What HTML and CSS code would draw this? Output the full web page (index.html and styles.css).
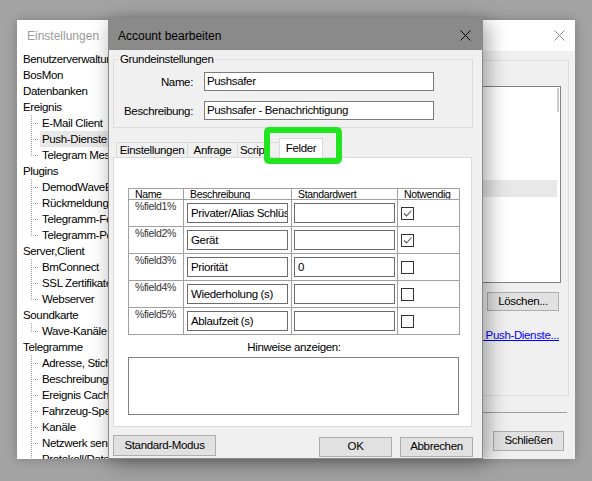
FILE: index.html
```html
<!DOCTYPE html>
<html lang="de">
<head>
<meta charset="utf-8">
<title>Account bearbeiten</title>
<link rel="stylesheet" href="styles.css">
</head>
<body>
<div class="desktop">
  <section class="win bgwin">
    <header class="titlebar bg-title">
      <span>Einstellungen</span>
      <svg class="xicon" width="11" height="11" viewBox="0 0 11 11"><path d="M0.5 0.5L10.5 10.5M10.5 0.5L0.5 10.5" stroke="#8a8a8a" stroke-width="1" fill="none"/></svg>
    </header>
    <div class="bgbody">
      <ul class="tree">
        <li>Benutzerverwaltung</li>
        <li>BosMon</li>
        <li>Datenbanken</li>
        <li>Ereignis</li>
        <li class="kid">E-Mail Client</li>
        <li class="kid"><span class="hl">Push-Dienste</span></li>
        <li class="kid last">Telegram Messenger</li>
        <li>Plugins</li>
        <li class="kid">DemodWaveExport</li>
        <li class="kid">Rückmeldung</li>
        <li class="kid">Telegramm-Felder</li>
        <li class="kid last">Telegramm-Post</li>
        <li>Server,Client</li>
        <li class="kid">BmConnect</li>
        <li class="kid">SSL Zertifikate</li>
        <li class="kid last">Webserver</li>
        <li>Soundkarte</li>
        <li class="kid last">Wave-Kanäle</li>
        <li>Telegramme</li>
        <li class="kid">Adresse, Stichwort</li>
        <li class="kid">Beschreibungen</li>
        <li class="kid">Ereignis Cache</li>
        <li class="kid">Fahrzeug-Speicher</li>
        <li class="kid">Kanäle</li>
        <li class="kid">Netzwerk senden</li>
        <li class="kid">Protokoll/Datei</li>
      </ul>
      <div class="rpane">
        <div class="rgroup">
          <div class="listbox">
            <div class="lb-main"><div class="sel"></div></div>
            <div class="lb-sb"><div class="thumb"></div></div>
          </div>
          <button class="btn btn-del">Löschen...</button>
          <a class="link" href="#">Weitere Push-Dienste...</a>
        </div>
        <div class="sep"></div>
        <button class="btn btn-close">Schließen</button>
      </div>
    </div>
  </section>

  <section class="win dlg">
    <header class="titlebar dlg-title">
      <span>Account bearbeiten</span>
      <svg class="xicon" width="11" height="11" viewBox="0 0 11 11"><path d="M0.5 0.5L10.5 10.5M10.5 0.5L0.5 10.5" stroke="#000" stroke-width="1" fill="none"/></svg>
    </header>
    <div class="dlg-body">
      <fieldset class="grp">
        <legend>Grundeinstellungen</legend>
        <div class="form">
          <label>Name:</label><div class="input">Pushsafer</div>
          <label>Beschreibung:</label><div class="input">Pushsafer - Benachrichtigung</div>
        </div>
      </fieldset>

      <div class="tabs">
        <div class="tabstrip">
          <div class="tab t-einst">Einstellungen</div>
          <div class="tab t-anf">Anfrage</div>
          <div class="tab t-script">Script</div>
          <div class="tab t-felder active">Felder</div>
        </div>
        <div class="panel">
          <div class="grid">
            <div class="hcell">Name</div>
            <div class="hcell">Beschreibung</div>
            <div class="hcell">Standardwert</div>
            <div class="hcell">Notwendig</div>

            <div class="cell name">%field1%</div>
            <div class="cell"><div class="tinput desc">Privater/Alias Schlüssel</div></div>
            <div class="cell"><div class="tinput std"></div></div>
            <div class="cell"><span class="cb"><svg width="11" height="11" viewBox="0 0 11 11"><path d="M2 5.5L4.5 8L9.5 2.5" stroke="#555" stroke-width="1.1" fill="none"/></svg></span></div>

            <div class="cell name">%field2%</div>
            <div class="cell"><div class="tinput desc">Gerät</div></div>
            <div class="cell"><div class="tinput std"></div></div>
            <div class="cell"><span class="cb"><svg width="11" height="11" viewBox="0 0 11 11"><path d="M2 5.5L4.5 8L9.5 2.5" stroke="#555" stroke-width="1.1" fill="none"/></svg></span></div>

            <div class="cell name">%field3%</div>
            <div class="cell"><div class="tinput desc">Priorität</div></div>
            <div class="cell"><div class="tinput std">0</div></div>
            <div class="cell"><span class="cb"></span></div>

            <div class="cell name">%field4%</div>
            <div class="cell"><div class="tinput desc">Wiederholung (s)</div></div>
            <div class="cell"><div class="tinput std"></div></div>
            <div class="cell"><span class="cb"></span></div>

            <div class="cell name">%field5%</div>
            <div class="cell"><div class="tinput desc">Ablaufzeit (s)</div></div>
            <div class="cell"><div class="tinput std"></div></div>
            <div class="cell"><span class="cb"></span></div>
          </div>
          <div class="hint">Hinweise anzeigen:</div>
          <div class="textarea"></div>
        </div>
      </div>

      <div class="footer">
        <button class="btn btn-std">Standard-Modus</button>
        <span class="spacer"></span>
        <button class="btn btn-ok">OK</button>
        <button class="btn btn-cancel">Abbrechen</button>
      </div>
    </div>
  </section>

  <div class="highlight"></div>
</div>
</body>
</html>
```

FILE: styles.css
```css
* { box-sizing: border-box; }

body {
  margin: 0;
  width: 592px;
  height: 481px;
  overflow: hidden;
  background: #a3a3a3;
  font-family: "Liberation Sans", Arial, sans-serif;
  font-size: 11.5px;
  letter-spacing: -0.35px;
  color: #000;
}

.desktop {
  position: relative;
  width: 592px;
  height: 481px;
}

.win {
  position: absolute;
  display: flex;
  flex-direction: column;
  background: #f0f0f0;
}

/* ---------- background window ---------- */
.bgwin {
  left: 17px;
  top: 20px;
  width: 558px;
  height: 439px;
  box-shadow: 0 0 10px rgba(0, 0, 0, 0.25);
}

.titlebar {
  flex: none;
  display: flex;
  align-items: center;
  justify-content: space-between;
  font-size: 12px;
  letter-spacing: 0;
}

.xicon { display: block; }

.bg-title {
  height: 31px;
  background: #fff;
  color: #9a9a9a;
  padding: 0 10px 0 10px;
}

.bgbody {
  flex: 1;
  display: flex;
  min-height: 0;
}

.tree {
  width: 100px;
  flex: none;
  margin: 0;
  padding: 0;
  list-style: none;
  background: #fff;
  overflow: hidden;
  white-space: nowrap;
}

.tree li {
  height: 16px;
  line-height: 16px;
  padding-left: 6px;
}

.tree li.kid {
  padding-left: 25px;
  background-image:
    repeating-linear-gradient(to bottom, #a0a0a0 0 1px, transparent 1px 2px),
    repeating-linear-gradient(to right, #a0a0a0 0 1px, transparent 1px 2px);
  background-size: 1px 16px, 8px 1px;
  background-position: 14px 0, 14px 8px;
  background-repeat: no-repeat;
}

.tree li.kid.last {
  background-size: 1px 9px, 8px 1px;
}

.tree .hl {
  display: block;
  margin-left: -2px;
  padding-left: 2px;
  background: #e8e8e8;
}

.rpane {
  flex: 1;
  display: flex;
  flex-direction: column;
  align-items: flex-end;
  padding: 9px 6px 0 6px;
}

.rgroup {
  align-self: stretch;
  height: 336px;
  border: 1px solid #dcdcdc;
  display: flex;
  flex-direction: column;
  align-items: flex-end;
  padding: 25px 7px 0 0;
}

.listbox {
  align-self: stretch;
  margin-left: 8px;
  height: 197px;
  border: 1px solid #828282;
  background: #fff;
  display: flex;
}

.lb-main {
  flex: 1;
  padding-top: 93px;
}

.sel {
  height: 17px;
  background: #e8e8e8;
}

.lb-sb {
  width: 3px;
  padding-top: 1px;
}

.thumb {
  width: 2px;
  height: 24px;
  background: #cdcdcd;
}

.btn {
  font-family: inherit;
  font-size: 11.5px;
  letter-spacing: inherit;
  color: #000;
  background: #e1e1e1;
  border: 1px solid #adadad;
  padding: 0;
  margin: 0;
  line-height: 1;
}

.btn-del {
  width: 72px;
  height: 19px;
  margin: 9px 2px 0 0;
}

.link {
  margin: 17px 2px 0 0;
  line-height: 15px;
  color: #0000ff;
  text-decoration: underline;
  white-space: nowrap;
}

.sep {
  align-self: stretch;
  height: 1px;
  background: #a0a0a0;
  margin: 16px 2px 0 0;
}

.btn-close {
  width: 71px;
  height: 20px;
  margin: 18px 5px 0 0;
}

/* ---------- dialog ---------- */
.dlg {
  left: 108px;
  top: 18px;
  width: 375px;
  height: 441px;
  border: 1px solid #8a8a8a;
  box-shadow: 4px 4px 20px rgba(0, 0, 0, 0.38);
}

.dlg-title {
  height: 31px;
  background: #8a8a8a;
  color: #000;
  padding: 2px 11px 0 9px;
}

.dlg-body {
  flex: 1;
  display: flex;
  flex-direction: column;
  padding: 1px 9px 0 4px;
}

.grp {
  margin: 0;
  padding: 0 7px 7px 0;
  border: 1px solid #dcdcdc;
  min-width: 0;
}

.grp legend {
  padding: 0 2px;
  margin-left: 4px;
  line-height: 16px;
  font-size: 11.5px;
}

.form {
  display: grid;
  grid-template-columns: 79px 230px;
  column-gap: 11px;
  row-gap: 10px;
  margin-top: 5px;
}

.form label {
  justify-self: end;
  align-self: center;
  white-space: nowrap;
}

.input {
  height: 19px;
  border: 1px solid #7a7a7a;
  background: #fff;
  padding-left: 2px;
  line-height: 17px;
  white-space: nowrap;
  overflow: hidden;
}

.tabs {
  margin-top: 10px;
  margin-right: 1px;
  display: flex;
  flex-direction: column;
}

.tabstrip {
  height: 19px;
  display: flex;
  align-items: flex-end;
  padding-left: 3px;
}

.tab {
  height: 15px;
  border: 1px solid #d9d9d9;
  border-bottom: none;
  background: #f0f0f0;
  line-height: 14px;
  text-align: center;
  white-space: nowrap;
  overflow: hidden;
}

.t-einst { width: 72px; }
.t-anf { width: 51px; margin-left: -1px; }
.t-script { width: 44px; margin-left: -1px; text-align: left; padding-left: 2px; }
.t-felder { width: 44px; margin-left: -2px; }

.tab.active {
  background: #fff;
  line-height: 18px;
  position: relative;
  z-index: 1;
  margin-bottom: -1px;
  height: 20px;
}

.panel {
  height: 270px;
  border: 1px solid #d9d9d9;
  background: #fff;
  padding: 30px 0 0 14px;
}

.grid {
  display: grid;
  grid-template-columns: 55px 108px 106px 62px;
  grid-template-rows: 11px repeat(5, 27px);
  width: 332px;
  border-left: 1px solid #a0a0a0;
  border-top: 1px solid #a0a0a0;
  font-size: 10.5px;
}

.grid > div {
  border-right: 1px solid #a0a0a0;
  border-bottom: 1px solid #a0a0a0;
  overflow: hidden;
  white-space: nowrap;
}

.hcell {
  line-height: 10px;
  padding-left: 6px;
}

.cell.name {
  padding-left: 6px;
  line-height: 12px;
  color: #333;
}

.tinput {
  margin-top: 3px;
  width: 101px;
  height: 20px;
  border: 1px solid #6b6b6b;
  background: #fff;
  padding-left: 3px;
  line-height: 19px;
  font-size: 11.5px;
  overflow: hidden;
  white-space: nowrap;
}

.tinput.desc { margin-left: 3px; }
.tinput.std { margin-left: 2px; }

.cb {
  display: block;
  width: 13px;
  height: 13px;
  margin: 7px 0 0 3px;
  border: 1px solid #333;
  background: #fff;
}

.cb svg { display: block; }

.hint {
  width: 332px;
  text-align: center;
  line-height: 14px;
  margin-top: 5px;
}

.textarea {
  width: 331px;
  height: 58px;
  margin-top: 3px;
  border: 1px solid #828282;
  background: #fff;
}

.footer {
  display: flex;
  align-items: flex-start;
  margin-top: 8px;
}

.spacer { flex: 1; }

.btn-std {
  width: 103px;
  height: 21px;
}

.btn-ok, .btn-cancel {
  width: 73px;
  height: 20px;
  margin-top: 2px;
}

.btn-cancel { margin-left: 8px; }

/* ---------- annotation overlay ---------- */
.highlight {
  position: absolute;
  left: 264px;
  top: 127px;
  width: 78px;
  height: 37px;
  border: 6px solid #1fe61f;
  border-radius: 5px;
}
```
